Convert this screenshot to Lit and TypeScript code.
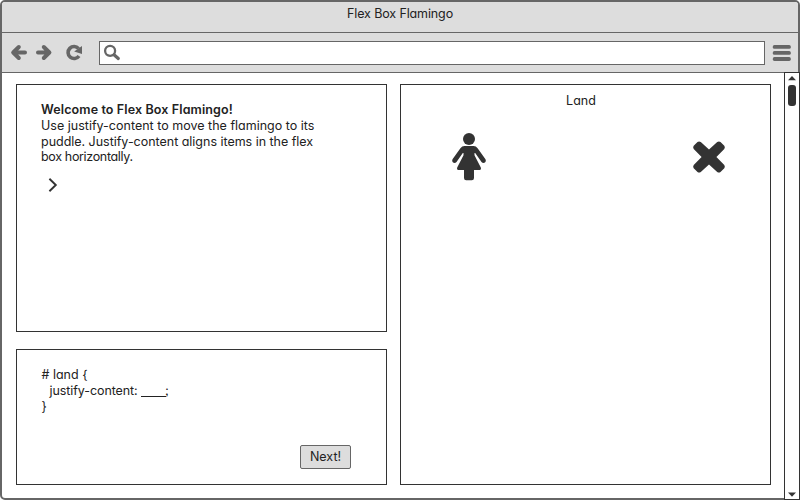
import { LitElement, html, css, svg } from "lit";
import { customElement } from "lit/decorators.js";

@customElement("app-root")
export class AppRoot extends LitElement {
  static styles = css`
    :host {
      display: block;
      width: 800px;
      height: 500px;
      background: #fff;
      color: #222;
      font-family: Inter, "Liberation Sans", sans-serif;
      font-feature-settings: "cv11", "ss03";
      font-size: 12.5px;
      line-height: 16px;
    }
    * { box-sizing: border-box; }
    svg { display: block; }
    .window {
      position: relative;
      width: 800px;
      height: 500px;
      border: 2px solid #666;
      border-radius: 5px;
      display: flex;
      flex-direction: column;
      background: #fff;
    }
    .title {
      height: 31px;
      flex: none;
      background: #ddd;
      border-bottom: 1px solid #666;
      border-radius: 3px 3px 0 0;
      text-align: center;
      padding-top: 4px;
      letter-spacing: -0.12px;
    }
    .toolbar {
      height: 40px;
      flex: none;
      background: #ddd;
      border-bottom: 1px solid #666;
      display: flex;
      align-items: flex-start;
      padding: 8px 7px 0 8px;
    }
    .nav { width: 89px; flex: none; }
    .address {
      flex: none;
      width: 666px;
      height: 24px;
      border: 1px solid #666;
      background: #fff;
    }
    .menu { margin-left: 7px; flex: none; }
    .page {
      flex: 1;
      display: grid;
      grid-template-columns: 371px 371px;
      grid-template-rows: 248px 136px;
      column-gap: 13px;
      row-gap: 17px;
      padding: 11px 0 0 14px;
    }
    .panel { border: 1px solid #333; }
    .intro { padding: 17px 24px; white-space: nowrap; }
    .line { display: block; }
    .line.last { line-height: 14px; letter-spacing: -0.34px; }
    .line.heading { font-weight: 600; letter-spacing: 0.12px; }
    .line.lead { letter-spacing: 0.01px; }
    .line.body { letter-spacing: -0.02px; }
    .chevron { margin: 14px 0 0 7px; }
    .land { grid-column: 2; grid-row: 1 / 3; padding: 8px 44px 0 50px; }
    .label { text-align: center; width: 260px; }
    .pieces { display: flex; justify-content: space-between; align-items: center; margin-top: 24px; }
    .code {
      padding: 17px 35px 15px 25px;
      display: flex;
      flex-direction: column;
      white-space: pre;
      line-height: 16px;
    }
    .code > div { margin-left: -0.5px; }
    .rule { padding-left: 8px; letter-spacing: -0.08px; }
    .blank { display: inline-block; width: 25px; height: 1px; background: #222; vertical-align: -2px; margin-right: -1px; }
    .next {
      margin: auto 0 0 auto;
      width: 51px;
      height: 24px;
      border: 1px solid #666;
      border-radius: 2px;
      background: #ddd;
      color: inherit;
      font: inherit;
      font-feature-settings: inherit;
      padding: 0;
      line-height: 20px;
    }
    .scroll {
      position: absolute;
      right: -2px;
      bottom: -2px;
      width: 16px;
      height: 428px;
      border: 1px solid #333;
      background: #fff;
      display: flex;
      flex-direction: column;
      align-items: center;
      padding: 3px 0 2px;
    }
    .thumb { width: 8px; height: 21px; border-radius: 3px; background: #333; margin-top: 4px; }
    .down { margin-top: auto; }
  `;

  private nav() {
    return svg`<svg width="80" height="24" viewBox="10 41 80 24" fill="none" stroke="#666" stroke-width="4" stroke-linecap="round" stroke-linejoin="round">
      <path d="M18.8 47L13.2 52.5L18.8 58M14 52.5H25"/>
      <path d="M43.8 47L49.4 52.5L43.8 58M49 52.5H38"/>
      <path d="M78.6 48.6A6 6 0 1 0 79 56" stroke-width="3.6" stroke-linecap="butt"/>
      <path d="M82 46V54L74.2 51.4Z" fill="#666" stroke="none"/>
    </svg>`;
  }

  render() {
    return html`
      <div class="window">
        <div class="title">Flex Box Flamingo</div>
        <div class="toolbar">
          <div class="nav">${this.nav()}</div>
          <div class="address">
            <svg width="24" height="22" viewBox="100 42 24 22" fill="none" stroke="#666">
              <circle cx="110.1" cy="50.8" r="5" stroke-width="2.3"/>
              <path d="M114 54.7L118.3 58.5" stroke-width="3.2" stroke-linecap="round"/>
            </svg>
          </div>
          <svg class="menu" width="20" height="24" viewBox="772 41 20 24" fill="#666">
            <rect x="772.8" y="45" width="18" height="3.8" rx="1.6"/>
            <rect x="772.8" y="51" width="18" height="3.8" rx="1.6"/>
            <rect x="772.8" y="57.1" width="18" height="3.8" rx="1.6"/>
          </svg>
        </div>
        <div class="page">
          <section class="panel intro">
            <span class="line heading">Welcome to Flex Box Flamingo!</span>
            <span class="line lead">Use justify-content to move the flamingo to its</span>
            <span class="line body">puddle. Justify-content aligns items in the flex</span>
            <span class="line last">box horizontally.</span>
            <svg class="chevron" width="10" height="14" viewBox="0 0 10 14" fill="none" stroke="#333" stroke-width="1.9"><path d="M1.4 .8L7.8 7L1.4 13.2"/></svg>
          </section>
          <section class="panel land">
            <div class="label">Land</div>
            <div class="pieces">
              <svg width="36" height="48" viewBox="451 133 36 48" fill="#333">
                <circle cx="469" cy="139" r="6"/>
                <path d="M464.5 146H473.5Q476 146 477.6 148.2L485.5 159.3Q486.5 161.3 485 162.6Q483 163.8 481.5 162L475.2 153H474.5V155.2L480.8 167.6Q481.5 170 479.6 170H474V178Q474 180.2 471.8 180.2H466.2Q464 180.2 464 178V170H458.4Q456.5 170 457.2 167.6L463.5 155.2V153H462.8L456.5 162Q455 163.8 453 162.6Q451.5 161.3 452.5 159.3L460.4 148.2Q462 146 464.5 146Z"/>
              </svg>
              <svg width="34" height="34" viewBox="692 140 34 34" fill="#333">
                <path d="M697.5 142Q699 140.9 700.8 142L709 149.6L717.2 142Q719 140.9 720.5 142L724.3 145.8Q725.4 147.3 724.3 149L716.4 157L724.3 165Q725.4 166.7 724.3 168.2L720.5 172Q719 173.1 717.2 172L709 164.4L700.8 172Q699 173.1 697.5 172L693.7 168.2Q692.6 166.7 693.7 165L701.6 157L693.7 149Q692.6 147.3 693.7 145.8Z"/>
              </svg>
            </div>
          </section>
          <section class="panel code"><div># land {</div><div class="rule">justify-content: <span class="blank"></span>;</div><div>}</div><button class="next">Next!</button></section>
        </div>
        <div class="scroll">
          <svg width="8" height="5" viewBox="0 0 8 5" fill="#333"><path d="M4 0L8 4.3H0Z"/></svg>
          <div class="thumb"></div>
          <svg class="down" width="8" height="5" viewBox="0 0 8 5" fill="#333"><path d="M0 .5H8L4 4.8Z"/></svg>
        </div>
      </div>
    `;
  }
}
